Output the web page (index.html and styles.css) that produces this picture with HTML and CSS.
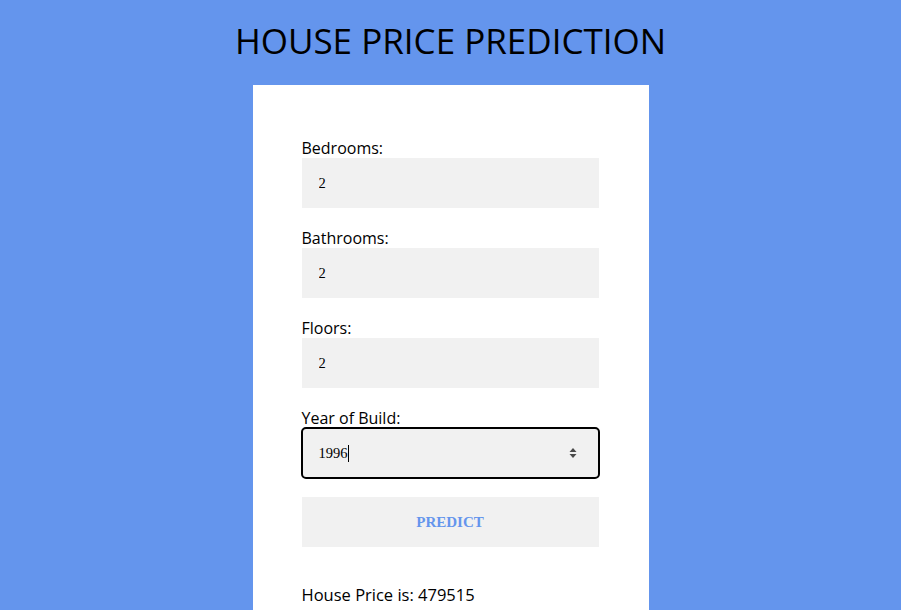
FILE: index.html
```html
<!DOCTYPE html>
<html lang="en">
<head>
<meta charset="utf-8">
<title>House Price Prediction</title>
<link rel="stylesheet" href="styles.css">
</head>
<body>
<h1 class="title">HOUSE PRICE PREDICTION</h1>
<main class="card">
  <form class="form">
    <label class="field">
      <span class="label">Bedrooms:</span>
      <input class="input" type="text" value="2">
    </label>
    <label class="field">
      <span class="label">Bathrooms:</span>
      <input class="input" type="text" value="2">
    </label>
    <label class="field">
      <span class="label">Floors:</span>
      <input class="input" type="text" value="2">
    </label>
    <label class="field">
      <span class="label">Year of Build:</span>
      <span class="input-wrap">
        <span class="input focused"><span class="value">1996</span><span class="caret"></span></span>
        <svg class="spin" width="10" height="16" viewBox="0 0 10 16"><path d="M1.5 7 L5 3 L8.5 7 Z M1.5 9 L5 13 L8.5 9 Z" fill="#4a4a4a"/></svg>
      </span>
    </label>
    <button class="btn" type="button">PREDICT</button>
  </form>
  <p class="result">House Price is: 479515</p>
</main>
</body>
</html>
```
FILE: styles.css
```css
html, body {
  margin: 0;
  padding: 0;
  background: #6495ed;
  height: 100%;
  overflow: hidden;
}
body {
  font-family: "Open Sans", "Noto Sans", sans-serif;
  color: #000;
}
.title {
  margin: 15px 0 18px;
  text-align: center;
  font-weight: 400;
  font-size: 35px;
  line-height: 52px;
}
.card {
  width: 396px;
  margin: 0 auto;
  background: #fff;
  box-sizing: border-box;
  padding: 53px 50px 0 49px;
  height: 600px;
}
.form {
  display: flex;
  flex-direction: column;
  gap: 20px;
}
.field {
  display: flex;
  flex-direction: column;
}
.label {
  font-size: 16px;
  line-height: 20px;
}
.input-wrap {
  position: relative;
  display: block;
}
.input {
  display: block;
  box-sizing: border-box;
  width: 297px;
  height: 50px;
  border: 0;
  margin: 0;
  padding: 0 16px 0 17px;
  background: #f1f1f1;
  font-family: "Liberation Serif", serif;
  font-size: 14.5px;
  color: #000;
  outline: none;
}
span.input {
  display: flex;
  align-items: center;
}
.focused {
  outline: 2px solid #000;
  outline-offset: -1px;
  border-radius: 4px;
}
.caret {
  display: inline-block;
  width: 1px;
  height: 17px;
  background: #000;
}
.spin {
  position: absolute;
  right: 21px;
  top: 17px;
}
.btn {
  margin-top: -1px;
  width: 297px;
  height: 50px;
  border: 0;
  background: #f1f1f1;
  color: #6495ed;
  font-family: "Liberation Serif", serif;
  font-weight: 700;
  font-size: 15px;
  padding: 0;
}
.result {
  margin: 38px 0 0;
  font-size: 16.5px;
  line-height: 20px;
}
```
